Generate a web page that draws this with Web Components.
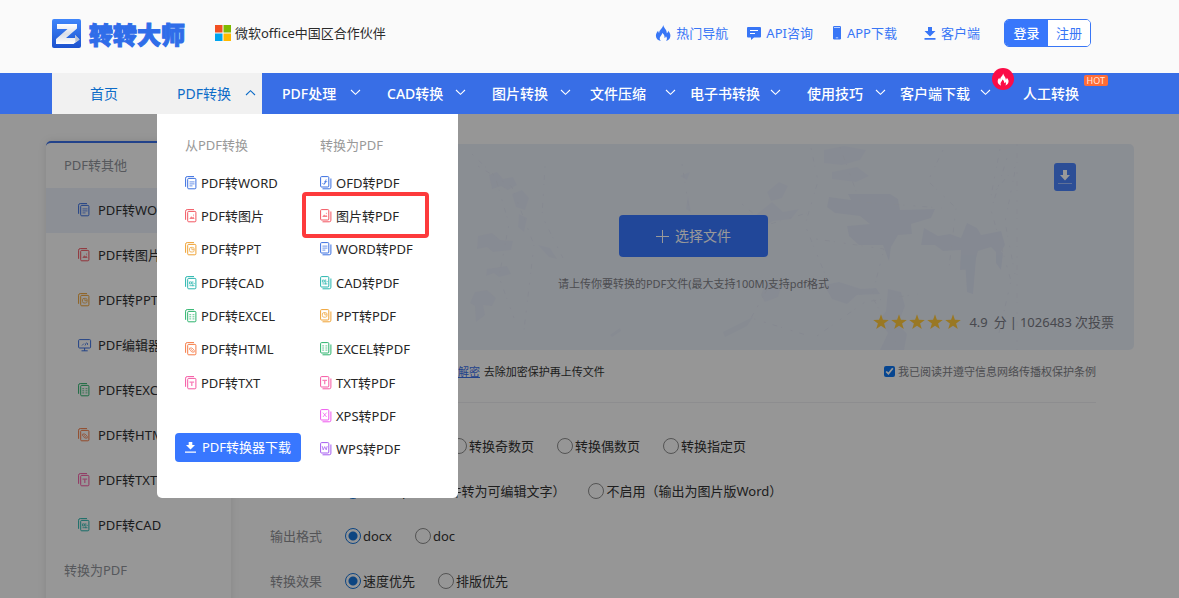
<!DOCTYPE html>
<html lang="zh-CN">
<head>
<meta charset="utf-8">
<meta name="viewport" content="width=device-width, initial-scale=1">
<title>转转大师</title>
<style>
  html, body { margin: 0; height: 100%; }
  body {
    overflow: hidden;
    background: #fafafa;
    color: #2b2b2b;
    font: 13px/18px "Noto Sans", "Noto Sans CJK SC", sans-serif;
  }
</style>
</head>
<body>
<page-shell>
  <site-header slot="header"></site-header>
  <site-nav slot="nav"></site-nav>
  <side-menu slot="side"></side-menu>
  <upload-panel slot="content"></upload-panel>
  <convert-form slot="content"></convert-form>
</page-shell>

<script>
const define = (name, html, setup) => {
  const template = document.createElement('template');
  template.innerHTML = html;
  customElements.define(name, class extends HTMLElement {
    constructor() {
      super();
      this.attachShadow({ mode: 'open' }).append(template.content.cloneNode(true));
    }
    connectedCallback() { if (setup) setup(this, this.shadowRoot); }
  });
};

const FLAME = 'M8.2 0c.5 3.200 3.800 4.600 3.600 8.200.9-.5 1.300-1.400 1.300-2.400 2.200 2.200 2.900 4.600 1.900 6.900-.7 1.700-2.100 2.800-3.900 3.300 1.200-1.600 1.100-3.400-.2-4.800-.2 1-.7 1.500-1.400 1.700.3-2.200-.6-3.900-2.300-5-.1 2.300-2.400 3.100-2.500 5.400 0 1.100.4 2 1.100 2.700C2.800 15.400.9 13.500.9 10.800c0-2.200 1.100-3.700 2.200-5 .1 1 .4 1.700 1 2.200C4.300 4.600 7.700 3.600 8.200 0z';

/* Document glyphs shared by the side menu and the drop-down */
const GLYPHS = {
  word:  ['#3a6fe0', '<path d="M5 6.500h5M5 8.500h5M5 10.500h3"/>'],
  image: ['#f25560', '<path fill="currentColor" stroke="none" d="M4.800 10.500l1.900-2.700 1.200 1.300.9-.9 1.300 2.300z"/><path d="M8.500 6.700h1"/>'],
  ppt:   ['#efa233', '<rect x="5" y="6" width="4.600" height="4.600" rx="1.500"/><path d="M7.400 6v2.300h2.200"/>'],
  cad:   ['#27b5ae', '<path d="M5 6.500h2v2H5zM8.300 5.800v5M5 10.300h5M9.800 7.500v1"/>'],
  excel: ['#2bb36c', '<path d="M4.800 6.300h1.900M8 6.300h1.900M4.800 8.400h1.900M8 8.400h1.900M4.800 10.500h1.900M8 10.500h1.900"/>'],
  html:  ['#f57b45', '<path d="M5.200 8.500V6.600h2.300l2.200 2.200v1.900H7.500zM6.300 7.700l2.300 2.200"/>'],
  txt:   ['#f557a3', '<path stroke-width="1.300" d="M5 6.700h4.600M7.300 6.700v4"/>'],
  xps:   ['#ee58ee', '<path d="M5.500 6l3.700 4.400M9.200 6l-3.700 4.400"/>'],
  wps:   ['#a45cf0', '<path d="M4.800 6.500l1 3.800 1.500-3.300 1.500 3.300 1-3.800"/>'],
  ofd:   ['#3a6fe0', '<path d="M8.800 5.800l-1.800 5M5 9.500a1.500 1.500 0 1 0 2-2M7.800 8h2"/>']
};

define('doc-icon', `
  <style>
    :host { display: block; flex: none; width: 12px; height: 14px; }
    svg { display: block; overflow: visible; }
  </style>
  <svg width="12" height="14" viewBox="0 0 12 14" fill="none" stroke="currentColor" aria-hidden="true"></svg>`,
  (el, root) => {
    const svg = root.querySelector('svg');
    const type = el.getAttribute('type');
    if (type === 'edit') {
      el.style.cssText = 'color:#3a6fe0;width:14px';
      svg.setAttribute('width', 14);
      svg.setAttribute('viewBox', '0 0 14 14');
      svg.innerHTML = '<rect x=".6" y="1.600" width="12" height="8.400" rx="1"/><path d="M3.500 12.800h6.200M6.600 10v2.800"/><path stroke-width=".8" d="M4 7.500l2-2M7 7.500l1.500-3M9.500 5v2"/>';
      return;
    }
    const [color, mark] = GLYPHS[type];
    el.style.color = color;
    svg.innerHTML = el.hasAttribute('target')
      ? `<rect x=".6" y=".6" width="8.200" height="10.400" rx="1"/><path d="M10.900 2.500v8.700a1.600 1.600 0 0 1-1.600 1.600H2.500"/><g transform="translate(-2.600 -2.400)" opacity=".75">${mark}</g>`
      : `<rect x="2.700" y="2.400" width="8.200" height="10.400" rx="1"/><path d="M.6 10.800V2.200A1.600 1.600 0 0 1 2.200.6H9"/><g transform="translate(-.5 -.6)" opacity=".75">${mark}</g>`;
  });

define('page-shell', `
  <style>
    :host { display: flex; flex-direction: column; height: 100vh; }
    main {
      position: relative; flex: 1; min-height: 0; overflow: hidden;
      display: grid; grid-template-columns: 185px minmax(0, 1fr); column-gap: 22px;
      align-items: start; padding: 27px 45px 0 46px;
    }
    main::after { content: ""; position: absolute; inset: 0; background: rgba(0, 0, 0, .4); }
    .content { padding-top: 3px; }
  </style>
  <slot name="header"></slot>
  <slot name="nav"></slot>
  <main>
    <slot name="side"></slot>
    <div class="content"><slot name="content"></slot></div>
  </main>`);

define('tool-link', `
  <style>
    :host { display: block; }
    a { display: flex; align-items: center; gap: 5px; color: #3876f6; text-decoration: none; }
  </style>
  <a href="#"><slot name="icon"></slot><slot></slot></a>`);

define('site-header', `
  <style>
    :host { display: block; flex: none; background: #fafafa; }
    .bar { max-width: 1075px; margin: 0 auto; height: 73px; display: flex; align-items: center; }
    .inner { flex: 1; height: 28px; display: flex; align-items: center; padding: 0 36px 7px 0; }
    .logo { display: flex; align-items: center; gap: 8px; color: #2f6de9; text-decoration: none;
      font: 900 24px/29px "Noto Sans CJK SC", sans-serif; -webkit-text-stroke: 1px #2f6de9; }
    .partner { display: flex; align-items: center; gap: 4px; margin-left: 30px; }
    .tools { display: flex; margin-left: auto; align-items: center; gap: 19px; }
    .client { margin: 0 5px 0 8px; }
    .auth { display: flex; height: 28px; box-sizing: border-box; border: 1px solid #3876f6; border-radius: 5px; overflow: hidden; }
    button { width: 42px; padding: 0; border: 0; font: inherit; background: #fff; color: #3876f6; }
    button.on { width: 43px; background: #3877fb; color: #fff; font-weight: 500; }
    svg { display: block; }
  </style>
  <div class="bar"><div class="inner">
    <a class="logo" href="#">
      <svg width="29" height="29" viewBox="0 0 29 29" aria-hidden="true">
        <defs>
          <linearGradient id="b" x2="0" y2="1"><stop stop-color="#3f86fb"/><stop offset="1" stop-color="#1c52ce"/></linearGradient>
          <linearGradient id="w" x2="0" y2="1"><stop stop-color="#fff"/><stop offset=".5" stop-color="#d9dee8"/><stop offset="1" stop-color="#fff"/></linearGradient>
        </defs>
        <rect width="29" height="29" rx="2" fill="url(#b)"/>
        <path d="M5 5h20v4.500L14 19h9v-3l4.500 4.500-6 4.500H4v-5L15.500 10H5z" fill="url(#w)"/>
        <path d="M23 16l4.500 4.500-4 3z" fill="#b9c2d3"/>
      </svg><span>转转大师</span></a>
    <div class="partner">
      <svg width="16" height="16" viewBox="0 0 16 16" aria-hidden="true"><path fill="#f25022" d="M0 0h7.500v7.500H0z"/><path fill="#7fba00" d="M8.500 0H16v7.500H8.500z"/><path fill="#00a4ef" d="M0 8.500h7.500V16H0z"/><path fill="#ffb900" d="M8.500 8.500H16V16H8.500z"/></svg>
      <span>微软office中国区合作伙伴</span>
    </div>
    <div class="tools">
      <tool-link><svg slot="icon" width="16" height="16" viewBox="0 0 16 16" fill="#3876f6"><path d="${FLAME}"/></svg>热门导航</tool-link>
      <tool-link><svg slot="icon" width="14" height="13" viewBox="0 0 14 13"><path fill="#3876f6" d="M1 0h12a1 1 0 0 1 1 1v8.500a1 1 0 0 1-1 1H7L4 13v-2.500H1a1 1 0 0 1-1-1V1a1 1 0 0 1 1-1z"/><path stroke="#fff" stroke-width="1.200" d="M3 3.500h8M3 6.500h5"/></svg>API咨询</tool-link>
      <tool-link><svg slot="icon" width="10" height="14" viewBox="0 0 10 14"><rect x="1" width="8" height="13.500" rx="1.200" fill="#3876f6"/><path stroke="#b9d0ff" d="M2 1.500h6M3.800 11.800h2.400"/></svg>APP下载</tool-link>
      <tool-link class="client"><svg slot="icon" width="12" height="13" viewBox="0 0 12 13" fill="#3876f6"><path d="M4 0h4v4h3.500L6 9.500.5 4H4zM.5 11h11v1.800H.5z"/></svg>客户端</tool-link>
      <div class="auth"><button class="on" type="button">登录</button><button type="button">注册</button></div>
    </div>
  </div></div>`);

define('nav-item', `
  <style>
    :host { display: block; position: relative; flex: 0 0 105px; color: #fff; --indent: 20px; }
    :host([active]) { background: #f1f1f1; color: #0d6cc8; }
    :host([plain]) { --indent: 26px; }
    :host([tight]) { --indent: 13px; }
    :host([long]) { --indent: 8px; }
    :host([home]) { --indent: 38px; }
    a { display: flex; align-items: center; height: 41px; box-sizing: border-box; padding: 0 6px 0 var(--indent);
      color: inherit; text-decoration: none; font-size: 14px; font-weight: 500; white-space: nowrap; }
    :host([active]) a { font-weight: 400; }
    svg { display: block; margin: 0 0 2px auto; }
    :host([open]) svg { transform: rotate(180deg); }
    :host([plain]) svg, :host([home]) svg { display: none; }
  </style>
  <a href="#"><slot></slot><svg width="11" height="7" viewBox="0 0 11 7" fill="none" stroke="currentColor" stroke-width="1.100" aria-hidden="true"><path d="M1 1l4.500 4.300L10 1"/></svg></a>
  <slot name="over"></slot>`);

define('site-nav', `
  <style>
    :host { display: block; flex: none; position: relative; z-index: 2; background: #386ee6; }
    nav { max-width: 1075px; margin: 0 auto; display: flex; }
    convert-menu { position: absolute; left: 0; top: 41px; }
    .fire { position: absolute; right: -17px; top: -5px; width: 22px; height: 22px; border-radius: 11px;
      background: #fb0c47; display: grid; place-items: center; }
    .hot { position: absolute; right: -6px; top: 2px; padding: 0 3px; border-radius: 2px; background: #ff6c37;
      color: #ffe9df; font-size: 9px; line-height: 11px; }
  </style>
  <nav>
    <nav-item active home>首页</nav-item>
    <nav-item active open>PDF转换<convert-menu slot="over"></convert-menu></nav-item>
    <nav-item>PDF处理</nav-item>
    <nav-item>CAD转换</nav-item>
    <nav-item>图片转换</nav-item>
    <nav-item tight>文件压缩</nav-item>
    <nav-item long>电子书转换</nav-item>
    <nav-item>使用技巧</nav-item>
    <nav-item long>客户端下载<span slot="over" class="fire"><svg width="12" height="13" viewBox="0 0 16 16" fill="#fff"><path d="${FLAME}"/></svg></span></nav-item>
    <nav-item plain>人工转换<span slot="over" class="hot">HOT</span></nav-item>
  </nav>`);

define('format-link', `
  <style>
    :host { display: flex; align-items: center; position: relative; }
    a { display: flex; align-items: center; gap: 4px; color: #262626; text-decoration: none; white-space: nowrap; }
    :host([marked])::after { content: ""; position: absolute; inset: -7px auto -5px -18px; width: 119px;
      border: 4px solid #fd3a3c; border-radius: 4px; }
  </style>
  <a href="#"><slot name="icon"></slot><slot></slot></a>`);

define('convert-menu', `
  <style>
    :host { display: block; width: 301px; box-sizing: border-box; padding: 20px 18px 32px; background: #fff;
      border-radius: 0 0 5px 5px; color: #262626; }
    .cols { display: grid; grid-template-columns: 135px 1fr; }
    h3 { margin: 0 0 10px; padding-left: 10px; font-size: 13px; font-weight: 400; line-height: 22px; color: #999; }
    .list { display: grid; grid-template-rows: repeat(9, 1fr); height: 300px; }
    format-link { margin-left: 10px; }
    button { grid-row: 9; width: 126px; height: 29px; padding: 0; border: 0; border-radius: 4px; background: #3877ff; color: #fff;
      font: inherit; display: flex; align-items: center; justify-content: center; gap: 6px; }
  </style>
  <div class="cols">
    <section><h3>从PDF转换</h3><div class="list" data-from></div></section>
    <section><h3>转换为PDF</h3><div class="list" data-to></div></section>
  </div>`,
  (el, root) => {
    const from = [['word', 'WORD'], ['image', '图片'], ['ppt', 'PPT'], ['cad', 'CAD'], ['excel', 'EXCEL'], ['html', 'HTML'], ['txt', 'TXT']];
    const to = [['ofd', 'OFD'], ['image', '图片'], ['word', 'WORD'], ['cad', 'CAD'], ['ppt', 'PPT'], ['excel', 'EXCEL'], ['txt', 'TXT'], ['xps', 'XPS'], ['wps', 'WPS']];
    root.querySelector('[data-from]').innerHTML = from.map(([t, n]) =>
      `<format-link><doc-icon slot="icon" type="${t}"></doc-icon>PDF转${n}</format-link>`).join('') +
      `<button type="button"><svg width="11" height="12" viewBox="0 0 11 12" fill="#fff" aria-hidden="true"><path d="M3.700 1h3.600v3H10L5.500 8.500 1 4h2.700zM0 10.500h11v1.200H0z"/></svg>PDF转换器下载</button>`;
    root.querySelector('[data-to]').innerHTML = to.map(([t, n], i) =>
      `<format-link ${i === 1 ? 'marked' : ''}><doc-icon slot="icon" type="${t}" target></doc-icon>${n}转PDF</format-link>`).join('');
  });

define('side-menu', `
  <style>
    :host { display: block; border-top: 2px solid #3a6fe6; border-radius: 5px 5px 0 0; background: #fcfcfc;
      box-shadow: 0 0 8px rgba(0, 0, 0, .1); min-height: 600px; }
    h2 { margin: 0; padding-left: 18px; font-size: 13px; font-weight: 400; line-height: 45px; color: #909399; }
    a { display: flex; align-items: center; height: 45px; box-sizing: border-box; padding: 0 0 2px 32px; color: #303133; text-decoration: none; }
    a.on { background: #e9eff9; }
    span { width: 20px; }
  </style>
  <h2>PDF转其他</h2>
  <div></div>
  <h2>转换为PDF</h2>`,
  (el, root) => {
    const items = [['word', 'PDF转WORD'], ['image', 'PDF转图片'], ['ppt', 'PDF转PPT'], ['edit', 'PDF编辑器'], ['excel', 'PDF转EXCEL'], ['html', 'PDF转HTML'], ['txt', 'PDF转TXT'], ['cad', 'PDF转CAD']];
    root.querySelector('div').innerHTML = items.map(([t, n], i) =>
      `<a href="#" class="${i ? '' : 'on'}"><span><doc-icon type="${t}"></doc-icon></span>${n}</a>`).join('');
  });

define('star-rating', `
  <style>:host { display: flex; gap: 2px; } svg { display: block; }</style>
  ${'<svg width="16" height="16" viewBox="0 0 16 16" fill="#ffc83c" aria-hidden="true"><path d="M8 .3l1.900 5.500 5.900.1-4.700 3.500 1.700 5.700L8 11.700l-4.800 3.400 1.700-5.700L.2 5.900l5.900-.1z"/></svg>'.repeat(5)}`);

define('upload-panel', `
  <style>
    :host { display: block; }
    .panel { position: relative; overflow: hidden; border-radius: 5px; background: #e7edf6; display: flex;
      flex-direction: column; align-items: center; padding: 71px 20px 19px; }
    .art { position: absolute; right: 0; top: 0; width: 676px; height: 206px; }
    .panel > :not(.art):not(.app) { position: relative; }
    .pick { width: 149px; height: 42px; padding: 0; border: 0; border-radius: 4px; background: #3877ff; color: #fff;
      font: inherit; font-size: 14px; display: flex; align-items: center; justify-content: center; gap: 6px; }
    p { margin: 18px 0 20px; font-size: 11px; color: #808187; }
    .rating { align-self: flex-end; display: flex; align-items: center; gap: 3px; color: #777982; }
    star-rating { margin-right: 5px; }
    .score { margin-right: 3px; }
    .app { position: absolute; right: 58px; top: 19px; width: 22px; height: 28px; padding: 0; border: 0; border-radius: 3px;
      background: #4a82fb; display: grid; place-items: center; }
  </style>
  <div class="panel">
    <svg class="art" viewBox="0 0 676 206" fill="#dde4f3" aria-hidden="true">
      <g opacity=".5">
        <path d="M31 31l8-3 6 7 10-2 4 8-9 5-7-4-9 3zM54 50l10-4 7 8-4 12-9-3zM61 70l8 4-3 14-6-5zM20 92l14-3 8 7 13 1-2 9-18 2-6-5-10 2zM80 101l12 3 7 11-8-2zM29 125l20-3 4 8-12 3-5-4-8 3zM17 148l12-2 9 8-4 8-9-1 2 10-9 7-1-16-5-3z"/>
        <path d="M222 32l10-4-3 8zM230 52l3 16-5-3zM309 48l12-10 9 4-6 12-11 3zM299 70l15-12 11 10 16-3-8 10-18 2-14 9-8-4z"/>
        <path d="M366 6l20-4 22 4-6 10-18 5-18-2zM374 28l25-5 12 9-13 6-24-3z"/>
        <path d="M309 136l14 7-3 10-13 5-4-7zM152 191l10-7 1 3-9 6zM265 188l30-15-6 9-22 11z"/>
      </g>
      <g opacity=".9">
        <path d="M390 50h42l8 5 2 11 35-1-4 9-20 6 1 10-14 1-7 12-2 14-6-16-24 0-10-9-2-10 23-2-10-8-25-3-8-6 2-10 22 3z"/>
        <path d="M466 84l14 8 12-2 11 4 6-15 10 5 4 7 20-4 4 14-6 10-8-8-13 4-5 18-13 1 1-20-18 1-8-6-14 0zM507 116l11-2-3 36-6-2zM538 104l7 5-2 17-5-7z"/>
        <path opacity=".7" d="M366 141l15-3 22 7 15-1 4 6-23 1-10 9-15-5zM430 145l13 3 4 14-7 18 9 10-3 16h-24l8-17-9-13 7-9z"/>
      </g>
      <g fill="none" stroke="#dfe5f1" stroke-width="1" stroke-dasharray="2 7 5 4 1 9">
        <path d="M14 10l23 22 14 48-10 53 15 41M20 22l34 21 22 58-10 85M87 22l-3 50 21 42M224 20l9 57 33-5M284 60l25 21 40-12M314 137l-21 37 55 17M353 4l7 33-13 44 22 54M382 3l20 55 82 6M358 95l68 10-12 47 24 46M485 6l-15 31 28 27-7 60M542 5l-9 47 25-30-11 56 10 52M549 14l-16 52 20 71-12 52M359 192l48-34 53-8"/>
        <path d="M559 0v206" opacity=".7"/>
      </g>
    </svg>
    <button class="pick" type="button"><svg width="13" height="13" viewBox="0 0 13 13" stroke="#fff" aria-hidden="true"><path d="M0 6.500h13M6.500 0v13"/></svg>选择文件</button>
    <p>请上传你要转换的PDF文件(最大支持100M)支持pdf格式</p>
    <div class="rating"><star-rating></star-rating><span class="score">4.9</span> <span>分</span> <span>|</span> <span>1026483</span> <span>次投票</span></div>
    <button class="app" type="button" aria-label="下载"><svg width="14" height="16" viewBox="0 0 14 16" aria-hidden="true"><path fill="#fff" d="M5 1h4v5h3l-5 5.500L2 6h3z"/><path stroke="#9fbcff" d="M0 14.500h14"/></svg></button>
  </div>`);

define('option-row', `
  <style>
    :host { display: block; }
    fieldset { display: flex; align-items: center; height: 45px; margin: 0; padding: 0 0 0 75px; border: 0; min-width: 0; }
    .name { flex: none; width: 75px; margin-left: -75px; color: #8c8d92; }
    .name:empty { display: none; }
    .opts { display: flex; gap: 23px; }
    label { display: flex; align-items: center; gap: 2px; white-space: nowrap; color: #333; }
    :host([even]) label { min-width: 83px; }
    input { appearance: none; flex: none; width: 16px; height: 16px; margin: 0; border: 1px solid #8c8c8c; border-radius: 50%; }
    input:checked { border-color: #1673d8; background: radial-gradient(circle, #1673d8 0 4px, transparent 5px); }
  </style>
  <fieldset><span class="name"></span><div class="opts" role="radiogroup"></div></fieldset>`,
  (el, root) => {
    const name = el.getAttribute('label');
    root.querySelector('.name').textContent = name;
    root.querySelector('.opts').setAttribute('aria-label', name || '页码');
    root.querySelector('.opts').innerHTML = el.getAttribute('options').split('|').map((o, i) =>
      `<label><input type="radio" name="choice" ${i ? '' : 'checked'}>${o}</label>`).join('');
  });

define('convert-form', `
  <style>
    :host { display: block; padding: 0 38px 0 17px; }
    .note { display: flex; justify-content: space-between; height: 52px; margin-bottom: 20px; border-bottom: 1px solid #ececee;
      padding-left: 188px; font-size: 11px; line-height: 43px; color: #333; white-space: nowrap; }
    a { margin-right: 1px; color: #3a6fe6; text-decoration: underline; }
    label { display: flex; align-items: center; gap: 3px; height: 43px; color: #808187; }
    input { width: 11px; height: 11px; margin: 0; accent-color: #0b74f0; }
  </style>
  <div class="note">
    <span><a href="#">解密</a> 去除加密保护再上传文件</span>
    <label><input type="checkbox" checked>我已阅读并遵守信息网络传播权保护条例</label>
  </div>
  <option-row even label="" options="|转换奇数页|转换偶数页|转换指定页"></option-row>
  <option-row label="" options="启用（pdf扫描件转为可编辑文字）|不启用（输出为图片版Word）"></option-row>
  <option-row label="输出格式" options="docx|doc"></option-row>
  <option-row label="转换效果" options="速度优先|排版优先"></option-row>`);
</script>
</body>
</html>
